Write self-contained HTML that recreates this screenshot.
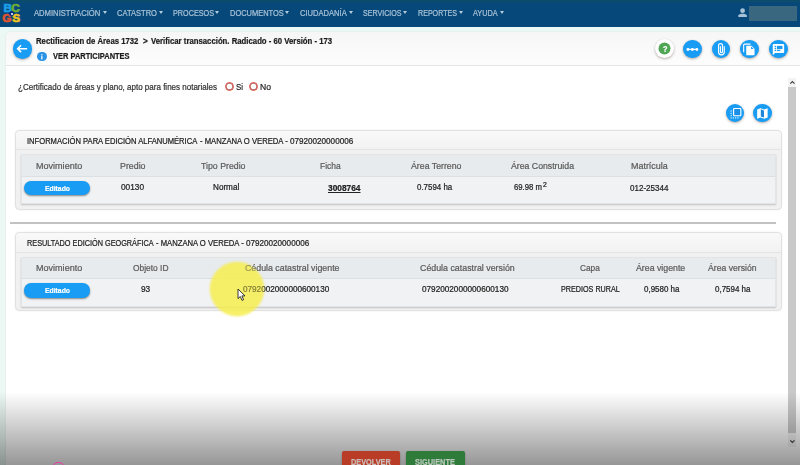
<!DOCTYPE html>
<html lang="es"><head><meta charset="utf-8"><title>BCGS - Verificar transacción</title>
<style>
*{box-sizing:border-box;margin:0;padding:0}
html,body{width:800px;height:465px;overflow:hidden;background:#ebf8f3;font-family:"Liberation Sans",sans-serif;color:#222}
.abs{position:absolute}
.t{position:absolute;white-space:nowrap;line-height:1;transform-origin:0 50%;-webkit-text-stroke:.22px}
#nav{position:absolute;left:-6px;top:-6px;width:812px;height:32.5px;padding:6px 0 0 6px;background:linear-gradient(#0b4b6c,#0b4b6c 7.5px,#07487a 9px)}
#navin{position:absolute;left:6px;top:6px;width:800px;height:26.5px}
#nav .c{position:absolute;top:10.7px;width:0;height:0;margin-left:-.4px;border-left:2.7px solid transparent;border-right:2.7px solid transparent;border-top:3.1px solid #b4cbdc}
#card{position:absolute;left:6px;top:32px;width:800px;height:440px;background:#fff;border-radius:5px 0 0 0;box-shadow:0 0 2px rgba(0,0,0,.10)}
#hdr{position:absolute;left:0;top:0;width:100%;height:33.5px;border-bottom:1px solid #e4e4e4;border-radius:5px 0 0 0;background:linear-gradient(#f6f6f6,#fdfdfd)}
.circ{position:absolute;border-radius:50%;background:#199cf4;box-shadow:0 1px 2.5px rgba(60,40,30,.38)}
.circ svg{position:absolute;left:0;top:0;width:100%;height:100%}
.panel{position:absolute;left:15px;width:766.5px;background:#f1f1f2;border:1px solid #e1e1e1;border-radius:4.5px;box-shadow:0 0 1.5px rgba(0,0,0,.10)}
.ph{position:absolute;left:0;top:0;width:100%;height:19.5px;background:linear-gradient(#f9f9f9,#f2f2f2);border-bottom:1px solid #e4e4e4;border-radius:4px 4px 0 0}
.tbl{position:absolute;left:4.5px;top:23.5px;width:755.5px;height:50px;background:#f1f2f3;border:1px solid #e2e4e6;box-shadow:0 1px 1.5px rgba(0,0,0,.20)}
.th{position:absolute;left:0;top:0;width:100%;height:21.5px;background:#e8ebee;border-bottom:1px solid #dde0e3}
.pill{position:absolute;left:24.2px;width:66px;height:14.4px;border-radius:7.2px;background:#199cf4;box-shadow:0 1px 2px rgba(0,0,0,.45)}
.btn{position:absolute;top:451.3px;height:20px;border-radius:2px;box-shadow:0 1px 2px rgba(0,0,0,.3)}
#wrap{position:absolute;left:0;top:0;width:800px;height:465px;filter:blur(.38px)}
</style></head><body><div id="wrap">
<div id="nav"><div id="navin">
 <div class="abs" style="left:0;top:0;width:24px;height:26px;font-weight:bold;font-size:11.8px;line-height:1;-webkit-text-stroke:0.7px">
  <span class="abs" style="left:3.4px;top:2.8px;color:#1b9fe8;-webkit-text-stroke-color:#1b9fe8">B</span><span class="abs" style="left:11.3px;top:2.8px;color:#6fae35;-webkit-text-stroke-color:#6fae35">C</span>
  <span class="abs" style="left:2.2px;top:12.6px;color:#e2532f;-webkit-text-stroke-color:#e2532f">G</span><span class="abs" style="left:12.2px;top:12.6px;color:#f0c21e;-webkit-text-stroke-color:#f0c21e">S</span>
  <div class="abs" style="left:8.9px;top:11.2px;width:5px;height:5px;border-radius:50%;background:#0b2b80"></div>
  <div class="abs" style="left:10.5px;top:12.7px;width:2px;height:2px;border-radius:50%;background:#fff"></div>
 </div>
 <i class="c" style="left:103.25px"></i><i class="c" style="left:159.00px"></i><i class="c" style="left:215.00px"></i><i class="c" style="left:285.50px"></i><i class="c" style="left:349.00px"></i><i class="c" style="left:403.75px"></i><i class="c" style="left:459.50px"></i><i class="c" style="left:500.50px"></i>
 <svg class="abs" style="left:737px;top:7px" width="11" height="11" viewBox="0 0 11 11"><circle cx="5.6" cy="3.7" r="2.35" fill="#a7c2d6"/><path d="M1.3 10 V8.6 C1.3 7.2 4 6.7 5.6 6.7 S9.9 7.2 9.9 8.6 V10 Z" fill="#a7c2d6"/></svg>
 <div class="abs" style="left:748.5px;top:6px;width:48.5px;height:15px;background:#38677f"></div>
</div></div>
<div id="card"><div id="hdr"></div></div>

<!-- back -->
<div class="circ" style="left:12.5px;top:39.2px;width:19.4px;height:19.4px"><svg viewBox="0 0 20 20"><path d="M14.6 10 H5.2 M8.3 6.5 L4.8 10 L8.3 13.5" fill="none" stroke="#fff" stroke-width="1.6"/></svg></div>
<!-- info -->
<div class="circ" style="left:37.3px;top:51.6px;width:9.6px;height:9.6px;box-shadow:none;background:#2b93e6"><svg viewBox="0 0 10 10"><rect x="4.4" y="4.3" width="1.3" height="3.4" fill="#fff"/><rect x="4.4" y="2.3" width="1.3" height="1.3" fill="#fff"/></svg></div>

<!-- header right icons -->
<div class="circ" style="left:655.1px;top:39.1px;width:19px;height:19px;background:#fff"><svg viewBox="0 0 19 19"><circle cx="9.5" cy="9.5" r="6" fill="#4fa654"/></svg></div>
<div class="circ" style="left:683.4px;top:39.5px;width:18.8px;height:18.8px"><svg viewBox="0 0 19 19"><path d="M5 9.5 H14" stroke="#fff" stroke-width="1.2"/><circle cx="5" cy="9.5" r="1.5" fill="#fff"/><circle cx="9.5" cy="9.5" r="1.5" fill="#fff"/><circle cx="14" cy="9.5" r="1.5" fill="#fff"/></svg></div>
<div class="circ" style="left:711.6px;top:39.5px;width:18.8px;height:18.8px"><svg viewBox="0 0 19 19"><path d="M12.4 6.2 V12.2 A2.9 2.9 0 0 1 6.6 12.2 V5.6 A2 2 0 0 1 10.6 5.6 V11.8 A1.05 1.05 0 0 1 8.5 11.8 V6.4" fill="none" stroke="#fff" stroke-width="1.15"/></svg></div>
<div class="circ" style="left:740.4px;top:39.5px;width:18.8px;height:18.8px"><svg viewBox="0 0 19 19"><path d="M10.6 4.2 H4.6 A0.9 0.9 0 0 0 3.7 5.1 V12.4" fill="none" stroke="#fff" stroke-width="1.1"/><path d="M6.3 6.6 A0.9 0.9 0 0 1 7.2 5.7 H11.6 L14.7 8.8 V14.6 A0.9 0.9 0 0 1 13.8 15.5 H7.2 A0.9 0.9 0 0 1 6.3 14.6 Z" fill="#fff"/><path d="M11.2 6.5 V9.2 H13.9 Z" fill="#1e9af1"/></svg></div>
<div class="circ" style="left:768.8px;top:39.5px;width:18.8px;height:18.8px"><svg viewBox="0 0 19 19"><path d="M3.8 5 A0.9 0.9 0 0 1 4.7 4.1 H14.4 A0.9 0.9 0 0 1 15.3 5 V12.2 A0.9 0.9 0 0 1 14.4 13.1 H6.1 L3.8 15.4 Z" fill="#fff"/><rect x="5.7" y="5.9" width="1.5" height="1.3" fill="#1e9af1"/><rect x="5.7" y="7.9" width="1.5" height="1.3" fill="#1e9af1"/><rect x="5.7" y="9.9" width="1.5" height="1.3" fill="#1e9af1"/><rect x="8" y="5.9" width="5.6" height="3.3" fill="#1e9af1"/><rect x="8" y="9.9" width="3.4" height="1.3" fill="#1e9af1"/></svg></div>

<!-- radios -->
<div class="abs" style="left:225.1px;top:82.1px;width:9px;height:9px;border:1.5px solid #de463b;border-radius:50%;box-shadow:inset 0 0 0 .7px #9a6560"></div>
<div class="abs" style="left:248.5px;top:82.1px;width:9px;height:9px;border:1.5px solid #de463b;border-radius:50%;box-shadow:inset 0 0 0 .7px #9a6560"></div>

<!-- two round buttons -->
<div class="circ" style="left:725.5px;top:103.7px;width:18.8px;height:18.8px"><svg viewBox="0 0 19 19"><rect x="7.7" y="4.6" width="7.3" height="7.3" rx="0.7" fill="#1b8fe6" stroke="#fff" stroke-width="1.15"/><g fill="#fff"><rect x="4.6" y="6.6" width="1.1" height="1.1"/><rect x="4.6" y="8.9" width="1.1" height="1.1"/><rect x="4.6" y="11.2" width="1.1" height="1.1"/><rect x="4.6" y="13.5" width="1.1" height="1.1"/><rect x="6.9" y="13.5" width="1.1" height="1.1"/><rect x="9.2" y="13.5" width="1.1" height="1.1"/><rect x="11.5" y="13.5" width="1.1" height="1.1"/></g></svg></div>
<div class="circ" style="left:752.9px;top:103.7px;width:18.8px;height:18.8px"><svg viewBox="0 0 19 19"><path d="M4.2 5.6 L7.6 4.4 L11.4 5.6 L14.8 4.4 V13.6 L11.4 14.8 L7.6 13.6 L4.2 14.8 Z" fill="#fff"/><path d="M7.9 5.4 L11.1 6.5 V13.7 L7.9 12.6 Z" fill="#1a86dc"/></svg></div>

<!-- panels -->
<div class="panel" style="top:129.8px;height:80px"><div class="ph"></div><div class="tbl"><div class="th"></div></div></div>
<div class="pill" style="top:181.1px"></div>
<div class="abs" style="left:9.5px;top:222.4px;width:766px;height:1.3px;background:#c2c2c2"></div>
<div class="panel" style="top:232.3px;height:78.7px"><div class="ph"></div><div class="tbl"><div class="th"></div></div></div>
<div class="pill" style="top:283.2px"></div>

<!-- scrollbar -->
<div class="abs" style="left:787.5px;top:77.5px;width:8.7px;height:369.5px;background:#f3f3f3"></div>
<div class="abs" style="left:788.3px;top:87px;width:8px;height:346px;background:#c9c9c9"></div>
<svg class="abs" style="left:787.5px;top:78px" width="9" height="9" viewBox="0 0 9 9"><path d="M2.3 5.6 L4.4 3.5 L6.5 5.6" fill="none" stroke="#444" stroke-width="1.2"/></svg>
<svg class="abs" style="left:787.5px;top:436.5px" width="9" height="9" viewBox="0 0 9 9"><path d="M2.3 3.4 L4.4 5.5 L6.5 3.4" fill="none" stroke="#444" stroke-width="1.2"/></svg>

<!-- bottom buttons -->

<div class="abs" style="left:210.2px;top:262.3px;width:54px;height:54px;border-radius:50%;background:rgba(246,238,70,.7);filter:blur(.8px)"></div>
<span class="t" style="left:34.25px;top:10.00px;font-size:8.2px;font-weight:normal;color:#a7c2d6;transform:scaleX(0.9335);">ADMINISTRACIÓN</span>
<span class="t" style="left:116.75px;top:10.00px;font-size:8.2px;font-weight:normal;color:#a7c2d6;transform:scaleX(0.9222);">CATASTRO</span>
<span class="t" style="left:172.75px;top:10.00px;font-size:8.2px;font-weight:normal;color:#a7c2d6;transform:scaleX(0.8832);">PROCESOS</span>
<span class="t" style="left:229.50px;top:10.00px;font-size:8.2px;font-weight:normal;color:#a7c2d6;transform:scaleX(0.9113);">DOCUMENTOS</span>
<span class="t" style="left:300.00px;top:10.00px;font-size:8.2px;font-weight:normal;color:#a7c2d6;transform:scaleX(0.9257);">CIUDADANÍA</span>
<span class="t" style="left:362.75px;top:10.00px;font-size:8.2px;font-weight:normal;color:#a7c2d6;transform:scaleX(0.8661);">SERVICIOS</span>
<span class="t" style="left:418.25px;top:10.00px;font-size:8.2px;font-weight:normal;color:#a7c2d6;transform:scaleX(0.8685);">REPORTES</span>
<span class="t" style="left:473.25px;top:10.00px;font-size:8.2px;font-weight:normal;color:#a7c2d6;transform:scaleX(0.8964);">AYUDA</span>
<span class="t" style="left:36.40px;top:37.00px;font-size:8.6px;font-weight:bold;color:#1c1c1c;transform:scaleX(0.9007);">Rectificacion de Áreas 1732</span>
<span class="t" style="left:142.90px;top:37.00px;font-size:8.6px;font-weight:bold;color:#1c1c1c;transform:scaleX(0.9540);">&gt;</span>
<span class="t" style="left:150.80px;top:37.00px;font-size:8.6px;font-weight:bold;color:#1c1c1c;transform:scaleX(0.9032);">Verificar transacción. Radicado - 60 Versión - 173</span>
<span class="t" style="left:53.00px;top:52.00px;font-size:8.6px;font-weight:bold;color:#1c1c1c;transform:scaleX(0.8703);">VER PARTICIPANTES</span>
<span class="t" style="left:18.00px;top:83.00px;font-size:8.6px;font-weight:normal;color:#333;transform:scaleX(0.9319);">¿Certificado de áreas y plano, apto para fines notariales</span>
<span class="t" style="left:236.00px;top:82.00px;font-size:9.4px;font-weight:normal;color:#222;transform:scaleX(0.8390);">Si</span>
<span class="t" style="left:259.60px;top:82.00px;font-size:9.4px;font-weight:normal;color:#222;transform:scaleX(0.9179);">No</span>
<span class="t" style="left:27.00px;top:137.00px;font-size:8.3px;font-weight:normal;color:#222;transform:scaleX(0.9146);">INFORMACIÓN PARA EDICIÓN ALFANUMÉRICA</span>
<span class="t" style="left:199.80px;top:137.00px;font-size:8.3px;font-weight:normal;color:#222;transform:scaleX(0.9235);">- MANZANA O VEREDA -</span>
<span class="t" style="left:289.80px;top:137.00px;font-size:8.3px;font-weight:normal;color:#222;transform:scaleX(0.9782);">07920020000006</span>
<span class="t" style="left:27.00px;top:239.00px;font-size:8.3px;font-weight:normal;color:#222;transform:scaleX(0.8793);">RESULTADO EDICIÓN GEOGRÁFICA</span>
<span class="t" style="left:156.40px;top:239.00px;font-size:8.3px;font-weight:normal;color:#222;transform:scaleX(0.9235);">- MANZANA O VEREDA -</span>
<span class="t" style="left:246.40px;top:239.00px;font-size:8.3px;font-weight:normal;color:#222;transform:scaleX(0.9782);">07920020000006</span>
<span class="t" style="left:35.75px;top:162.00px;font-size:8.9px;font-weight:normal;color:#5a5a5a;transform:scaleX(1.0189);">Movimiento</span>
<span class="t" style="left:119.50px;top:162.00px;font-size:8.9px;font-weight:normal;color:#5a5a5a;transform:scaleX(0.9939);">Predio</span>
<span class="t" style="left:200.50px;top:162.00px;font-size:8.9px;font-weight:normal;color:#5a5a5a;transform:scaleX(0.9875);">Tipo Predio</span>
<span class="t" style="left:319.50px;top:162.00px;font-size:8.9px;font-weight:normal;color:#5a5a5a;transform:scaleX(0.9561);">Ficha</span>
<span class="t" style="left:410.50px;top:162.00px;font-size:8.9px;font-weight:normal;color:#5a5a5a;transform:scaleX(0.9872);">Área Terreno</span>
<span class="t" style="left:511.00px;top:162.00px;font-size:8.9px;font-weight:normal;color:#5a5a5a;transform:scaleX(0.9822);">Área Construida</span>
<span class="t" style="left:630.75px;top:162.00px;font-size:8.9px;font-weight:normal;color:#5a5a5a;transform:scaleX(1.0068);">Matrícula</span>
<span class="t" style="left:121.25px;top:184.00px;font-size:8.2px;font-weight:normal;color:#222;transform:scaleX(1.0096);">00130</span>
<span class="t" style="left:212.50px;top:184.00px;font-size:8.2px;font-weight:normal;color:#222;transform:scaleX(0.9947);">Normal</span>
<span class="t" style="left:328.00px;top:185.00px;font-size:8.2px;font-weight:bold;color:#222;transform:scaleX(1.0196);text-decoration:underline">3008764</span>
<span class="t" style="left:416.75px;top:184.00px;font-size:8.2px;font-weight:normal;color:#222;transform:scaleX(0.9674);">0.7594 ha</span>
<span class="t" style="left:514.00px;top:184.00px;font-size:8.2px;font-weight:normal;color:#222;transform:scaleX(0.9461);">69.98 m</span>
<span class="t" style="left:542.80px;top:182.00px;font-size:6.4px;font-weight:normal;color:#222;transform:scaleX(1.0667);">2</span>
<span class="t" style="left:629.50px;top:185.00px;font-size:8.2px;font-weight:normal;color:#222;transform:scaleX(0.9832);">012-25344</span>
<span class="t" style="left:45.00px;top:185.00px;font-size:7.4px;font-weight:bold;color:#fff;transform:scaleX(0.9222);">Editado</span>
<span class="t" style="left:35.75px;top:264.00px;font-size:8.9px;font-weight:normal;color:#5a5a5a;transform:scaleX(1.0189);">Movimiento</span>
<span class="t" style="left:133.25px;top:264.00px;font-size:8.9px;font-weight:normal;color:#5a5a5a;transform:scaleX(0.9467);">Objeto ID</span>
<span class="t" style="left:245.00px;top:264.00px;font-size:8.9px;font-weight:normal;color:#5a5a5a;transform:scaleX(0.9925);">Cédula catastral vigente</span>
<span class="t" style="left:419.50px;top:264.00px;font-size:8.9px;font-weight:normal;color:#5a5a5a;transform:scaleX(0.9951);">Cédula catastral versión</span>
<span class="t" style="left:580.25px;top:264.00px;font-size:8.9px;font-weight:normal;color:#5a5a5a;transform:scaleX(0.9308);">Capa</span>
<span class="t" style="left:636.25px;top:264.00px;font-size:8.9px;font-weight:normal;color:#5a5a5a;transform:scaleX(0.9881);">Área vigente</span>
<span class="t" style="left:708.25px;top:264.00px;font-size:8.9px;font-weight:normal;color:#5a5a5a;transform:scaleX(0.9733);">Área versión</span>
<span class="t" style="left:140.75px;top:286.00px;font-size:8.2px;font-weight:normal;color:#222;transform:scaleX(1.0154);">93</span>
<span class="t" style="left:243.00px;top:286.00px;font-size:8.2px;font-weight:normal;color:#222;transform:scaleX(0.9967);">0792002000000600130</span>
<span class="t" style="left:421.50px;top:286.00px;font-size:8.2px;font-weight:normal;color:#222;transform:scaleX(0.9996);">0792002000000600130</span>
<span class="t" style="left:560.60px;top:286.00px;font-size:8.2px;font-weight:normal;color:#222;transform:scaleX(0.8790);">PREDIOS RURAL</span>
<span class="t" style="left:643.75px;top:286.00px;font-size:8.2px;font-weight:normal;color:#222;transform:scaleX(0.9743);">0,9580 ha</span>
<span class="t" style="left:714.50px;top:286.00px;font-size:8.2px;font-weight:normal;color:#222;transform:scaleX(0.9743);">0,7594 ha</span>
<span class="t" style="left:45.00px;top:287.00px;font-size:7.4px;font-weight:bold;color:#fff;transform:scaleX(0.9222);">Editado</span>
<span class="t" style="left:662.90px;top:44.00px;font-size:9.6px;font-weight:bold;color:#fff;transform:scaleX(0.7660);">?</span>

<!-- highlight + cursor -->
<div class="abs" style="left:210.2px;top:262.3px;width:54px;height:54px;border-radius:50%;background:rgba(246,238,80,.45);filter:blur(.8px)"></div>
<svg class="abs" style="left:236.5px;top:287.5px" width="9" height="14" viewBox="0 0 9 14"><path d="M1 1 V10.6 L3.3 8.5 L5 12.4 L6.6 11.7 L4.9 7.9 H8 Z" fill="#fff" stroke="#222" stroke-width="0.9" stroke-linejoin="round"/></svg>

<!-- bottom shade overlay -->
<div class="abs" style="left:-6px;top:392px;width:812px;height:83px;background:linear-gradient(rgba(0,0,0,0),rgba(0,0,0,.41) 73px,rgba(0,0,0,.46))"></div>
<div class="btn" style="left:341.6px;width:58.2px;background:#b93c26"></div>
<div class="btn" style="left:406px;width:58.7px;background:#2f7b3a"></div>
<span class="t" style="left:350.60px;top:459.00px;font-size:8.2px;font-weight:bold;color:#cbbdb9;transform:scaleX(0.8956);">DEVOLVER</span>
<span class="t" style="left:415.40px;top:459.00px;font-size:8.2px;font-weight:bold;color:#b9c7bc;transform:scaleX(0.9039);">SIGUIENTE</span>
<div class="abs" style="left:52.4px;top:461.6px;width:12.6px;height:12.6px;border:1.5px solid #e93aa8;border-radius:50%"></div>
</div></body></html>
